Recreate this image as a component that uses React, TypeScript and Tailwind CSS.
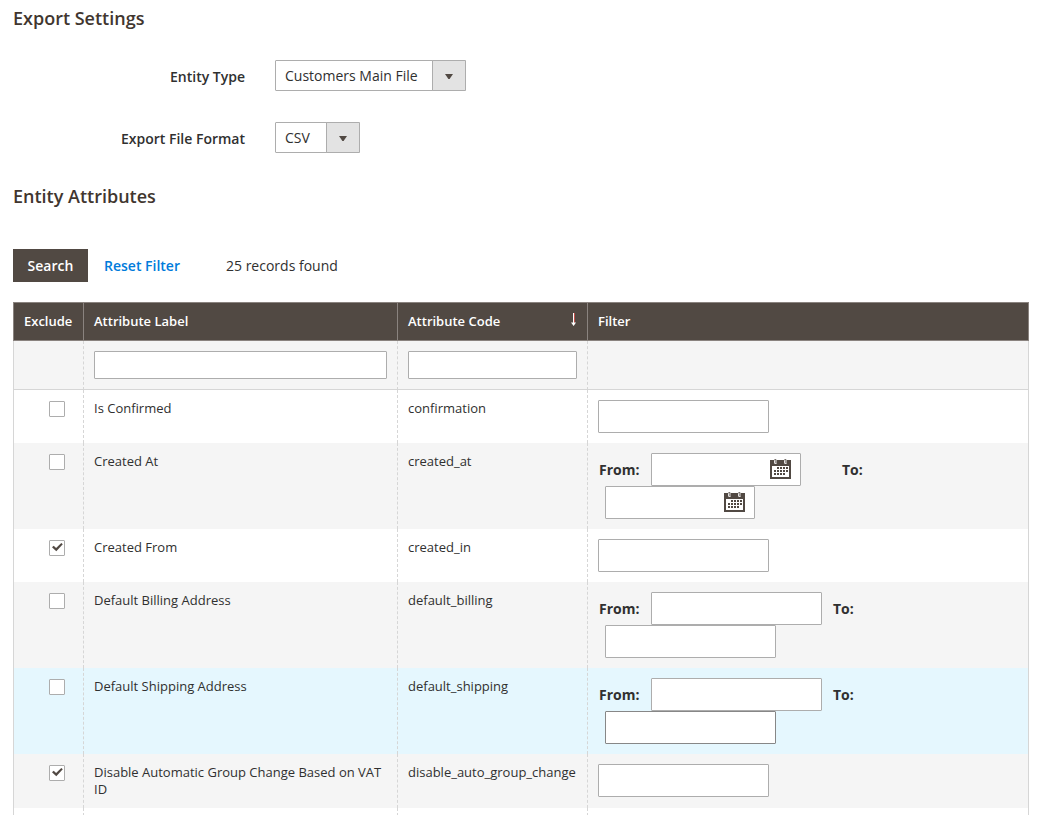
import { useId, useState } from "react";

type FilterKind = "text" | "date" | "number";

interface Attribute {
  label: string;
  code: string;
  filter: FilterKind;
  excluded?: boolean;
  active?: boolean;
}

const attributes: Attribute[] = [
  { label: "Is Confirmed", code: "confirmation", filter: "text" },
  { label: "Created At", code: "created_at", filter: "date" },
  { label: "Created From", code: "created_in", filter: "text", excluded: true },
  { label: "Default Billing Address", code: "default_billing", filter: "number" },
  { label: "Default Shipping Address", code: "default_shipping", filter: "number", active: true },
  {
    label: "Disable Automatic Group Change Based on VAT ID",
    code: "disable_auto_group_change",
    filter: "text",
    excluded: true,
  },
];

const inputBase = "block rounded-[1px] border bg-white px-2 outline-none focus:border-[#007bdb]";

function SelectField({ label, value }: { label: string; value: string }) {
  const id = useId();
  return (
    <div className="flex items-center gap-[30px]">
      <label htmlFor={id} className="w-[232px] pt-0.5 text-right text-sm font-semibold">
        {label}
      </label>
      <div className="relative">
        <select
          id={id}
          className="block h-[31px] min-w-[85px] appearance-none rounded-[1px] border border-[#adadad] bg-white pr-[47px] pl-[9px] text-sm text-[#303030] outline-none"
        >
          <option>{value}</option>
        </select>
        <span className="pointer-events-none absolute inset-y-0 right-0 flex w-[34px] items-center justify-center rounded-r-[1px] border border-[#adadad] bg-[#e3e3e3]">
          <svg viewBox="0 0 8 5" className="mt-0.5 h-[5px] w-2" fill="#514943" aria-hidden="true">
            <path d="M0 0h8L4.6 5H3.4z" />
          </svg>
        </span>
      </div>
    </div>
  );
}

function CalendarIcon() {
  const dots = [
    [7, 8], [10, 8], [13, 8], [16, 8],
    [4, 11], [7, 11], [10, 11], [13, 11], [16, 11],
    [4, 14], [7, 14], [10, 14], [13, 14],
  ];
  return (
    <svg viewBox="0 0 21 20" className="h-5 w-[21px]" aria-hidden="true">
      <path fill="#514943" fillRule="evenodd" d="M0 1h21v19H0zM2 7v11h17V7z" />
      <path fill="#e8e6e5" d="M4 0h3v3.6a1.5 1.5 0 0 1-3 0zM14 0h3v3.6a1.5 1.5 0 0 1-3 0z" />
      <path fill="none" stroke="#514943" strokeWidth="1" d="M4.5 1.2Q4.6.5 5.3.5q.7 0 .7.8V4M14.5 1.2q.1-.7.8-.7.7 0 .7.8V4" />
      {dots.map(([x, y]) => (
        <rect key={`${x}-${y}`} x={x} y={y} width="2" height="2" fill="#514943" />
      ))}
    </svg>
  );
}

function RangeInput({ id, date, strong }: { id: string; date: boolean; strong?: boolean }) {
  if (date) {
    return (
      <div className="relative w-fit">
        <input id={id} type="text" className={`${inputBase} h-[33px] w-[150px] border-[#adadad] pr-9`} />
        <button type="button" aria-label="Select date" className="absolute top-1.5 right-[10px]">
          <CalendarIcon />
        </button>
      </div>
    );
  }
  return (
    <input
      id={id}
      type="text"
      className={`${inputBase} h-[33px] w-[171px] ${strong ? "border-[#878787]" : "border-[#adadad]"}`}
    />
  );
}

function RangeFilter({ date, strong }: { date: boolean; strong?: boolean }) {
  const id = useId();
  return (
    <div className="text-sm font-bold">
      <div className="flex items-center">
        <label htmlFor={`${id}-from`} className="w-[53px] pl-px">
          From:
        </label>
        <RangeInput id={`${id}-from`} date={date} />
        <label htmlFor={`${id}-to`} className={date ? "ml-[41px]" : "ml-[11px]"}>
          To:
        </label>
      </div>
      <div className="pl-[7px]">
        <RangeInput id={`${id}-to`} date={date} strong={strong} />
      </div>
    </div>
  );
}

function ExcludeCheckbox({ label, initial }: { label: string; initial: boolean }) {
  const [checked, setChecked] = useState(initial);
  return (
    <label className="relative mt-px mr-2 ml-auto block size-4">
      <input
        type="checkbox"
        aria-label={`Exclude ${label}`}
        checked={checked}
        onChange={(e) => setChecked(e.target.checked)}
        className="block size-4 appearance-none rounded-[1px] border border-[#adadad] bg-white"
      />
      {checked && (
        <svg viewBox="0 0 16 16" className="pointer-events-none absolute inset-0 size-4" aria-hidden="true">
          <path d="M3 7.3l1.7-1.5 2.4 2.3L12.3 3l1.5 1.2-6.5 7z" fill="#514943" />
        </svg>
      )}
    </label>
  );
}

function AttributeRow({ item }: { item: Attribute }) {
  const cell = "border-l border-[#d6d6d6] p-[10px] align-top";
  const dashedCell = `${cell} border-dashed`;
  return (
    <tr className={item.active ? "bg-[#e5f7fe]" : "odd:bg-white even:bg-[#f5f5f5]"}>
      <td className={cell}>
        <ExcludeCheckbox label={item.label} initial={!!item.excluded} />
      </td>
      <td className={dashedCell}>{item.label}</td>
      <td className={dashedCell}>{item.code}</td>
      <td className="border-x border-[#d6d6d6] p-[10px] align-top [border-left-style:dashed]">
        {item.filter === "text" ? (
          <input
            type="text"
            aria-label={`Filter ${item.label}`}
            className={`${inputBase} h-[33px] w-[171px] border-[#adadad]`}
          />
        ) : (
          <RangeFilter date={item.filter === "date"} strong={item.active} />
        )}
      </td>
    </tr>
  );
}

export default function App() {
  const th = "border-y border-l border-[#8a837f] px-[10px] py-[10px] text-left font-semibold";
  return (
    <main className="h-screen overflow-hidden bg-white pt-1.5 pr-[14px] pl-[13px] font-['Open_Sans','Noto_Sans',sans-serif] text-[#303030]">
      <section>
        <h2 className="text-lg leading-6 font-semibold text-[#41362f]">Export Settings</h2>
        <div className="mt-[30px] flex flex-col gap-[31px]">
          <SelectField label="Entity Type" value="Customers Main File" />
          <SelectField label="Export File Format" value="CSV" />
        </div>
      </section>

      <section className="mt-[31px]">
        <h2 className="text-lg leading-6 font-semibold text-[#41362f]">Entity Attributes</h2>
        <div className="mt-[41px] flex items-center text-sm">
          <button type="button" className="h-[33px] min-w-[75px] bg-[#514943] px-[14px] font-semibold text-white">
            Search
          </button>
          <button type="button" className="ml-4 font-semibold text-[#007bdb]">
            Reset Filter
          </button>
          <span className="ml-[46px]">25 records found</span>
        </div>

        <table className="mt-5 w-full table-fixed border-separate border-spacing-0 text-[13px] leading-[17px]">
          <colgroup>
            <col className="w-[70px]" />
            <col className="w-[314px]" />
            <col className="w-[190px]" />
            <col />
          </colgroup>
          <thead>
            <tr className="bg-[#514943] text-white">
              <th className={th}>Exclude</th>
              <th className={th}>Attribute Label</th>
              <th className={th}>
                <div className="flex justify-between">
                  Attribute Code
                  <svg viewBox="0 0 7 13" className="h-[13px] w-[7px]" aria-hidden="true">
                    <path d="M3 0h1v12H3z" fill="#fff" />
                    <path d="M4 0h1v10H4z" fill="#c0504a" />
                    <path d="M1 9.5h5L3.6 13z" fill="#fff" />
                  </svg>
                </div>
              </th>
              <th className={`${th} border-r`}>Filter</th>
            </tr>
            <tr className="h-[49px] bg-[#f5f5f5]">
              <td className="border-b border-l border-[#d6d6d6]" />
              <td className="border-b border-l border-[#d6d6d6] px-[10px] [border-left-style:dashed]">
                <input type="text" aria-label="Attribute Label" className={`${inputBase} h-7 w-full border-[#adadad]`} />
              </td>
              <td className="border-b border-l border-[#d6d6d6] px-[10px] [border-left-style:dashed]">
                <input type="text" aria-label="Attribute Code" className={`${inputBase} h-7 w-full border-[#adadad]`} />
              </td>
              <td className="border-x border-b border-[#d6d6d6] [border-left-style:dashed]" />
            </tr>
          </thead>
          <tbody>
            {attributes.map((item) => (
              <AttributeRow key={item.code} item={item} />
            ))}
            <tr className="h-[53px] bg-white">
              <td className="border-l border-[#d6d6d6]" />
              <td className="border-l border-dashed border-[#d6d6d6]" />
              <td className="border-l border-dashed border-[#d6d6d6]" />
              <td className="border-x border-[#d6d6d6] [border-left-style:dashed]" />
            </tr>
          </tbody>
        </table>
      </section>
    </main>
  );
}
